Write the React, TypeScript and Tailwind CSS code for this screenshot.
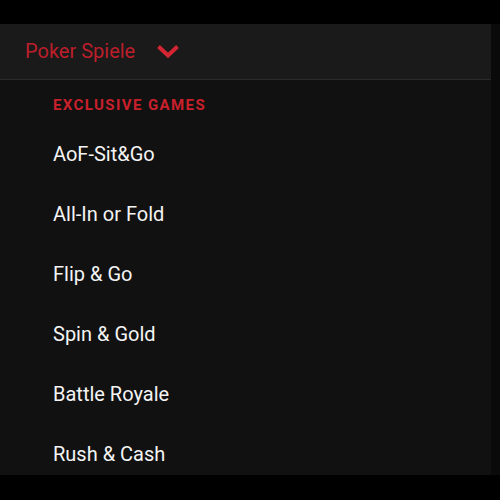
const games = ["AoF-Sit&Go", "All-In or Fold", "Flip & Go", "Spin & Gold", "Battle Royale", "Rush & Cash"];

export default function App() {
    return (
        <div className="flex w-[500px] h-[500px] bg-black pt-6 font-['Roboto',sans-serif]">
            <div className="flex flex-col w-[491px] h-[451px] bg-[#111111] overflow-hidden">
                <div className="flex shrink-0 items-center h-[56px] px-[25px] bg-[#1a1a1a] border-b border-[#2a2a2a]">
                    <span className="text-[20px] text-[#bc1f2b] -mt-[1px]">Poker Spiele</span>
                    <svg className="ml-[21px]" width="24" height="15" viewBox="0 0 24 15">
                        <path d="M2.5 2.5 L12 11.5 L21.5 2.5" fill="none" stroke="#d42532" strokeWidth="4" />
                    </svg>
                </div>
                <div className="flex shrink-0 flex-col pl-[53px]">
                    <div className="mt-[15px] h-5 leading-5 text-[15px] font-bold tracking-[1.4px] text-[#c9202c]">
                        EXCLUSIVE GAMES
                    </div>
                    <div className="flex flex-col mt-[9px]">
                        {games.map((g) => (
                            <div key={g} className="flex items-center h-[60px] shrink-0 text-[20px] text-[#f4f4f4]">
                                {g}
                            </div>
                        ))}
                    </div>
                </div>
            </div>
            <div className="w-[9px] h-[451px] bg-[#0a0a0a]"></div>
        </div>
    )
}
